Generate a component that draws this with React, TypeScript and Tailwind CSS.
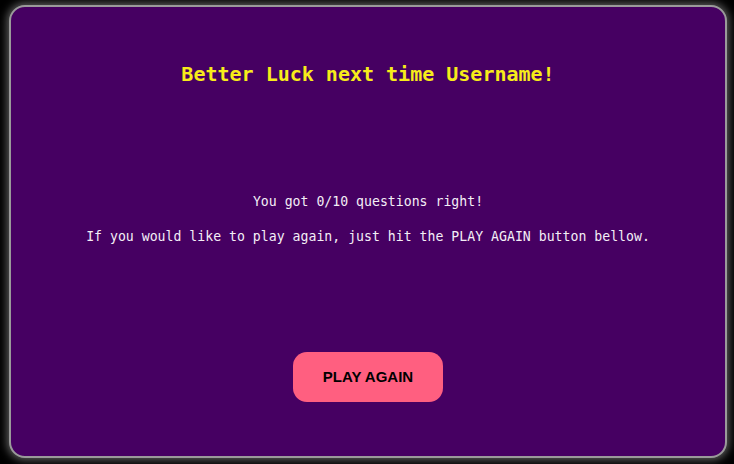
export default function App() {
  return (
    <div className="h-[464px] w-[734px] bg-black pl-[9px] pt-[5px]">
      <div className="flex h-[453px] w-[718px] flex-col items-center rounded-[16px] border-2 border-[#9a9a9a] bg-[#460062] shadow-[0_0_8px_2px_rgba(160,160,160,0.6)]">
        <h1 className="mt-[53px] font-['DejaVu_Sans_Mono',monospace] text-[20px] leading-[28px] font-bold text-[#f7ec1a]">
          Better Luck next time Username!
        </h1>
        <div className="mt-[106px] flex flex-col items-center gap-[19px] font-['DejaVu_Sans_Mono',monospace] text-[13.2px] leading-[16px] text-[#f4eef6]">
          <p>You got 0/10 questions right!</p>
          <p>If you would like to play again, just hit the PLAY AGAIN button bellow.</p>
        </div>
        <button className="mt-[107px] h-[50px] w-[150px] rounded-[14px] bg-[#ff5f80] font-['Liberation_Sans',Arial,sans-serif] text-[15px] font-bold text-black">
          PLAY AGAIN
        </button>
      </div>
    </div>
  );
}
